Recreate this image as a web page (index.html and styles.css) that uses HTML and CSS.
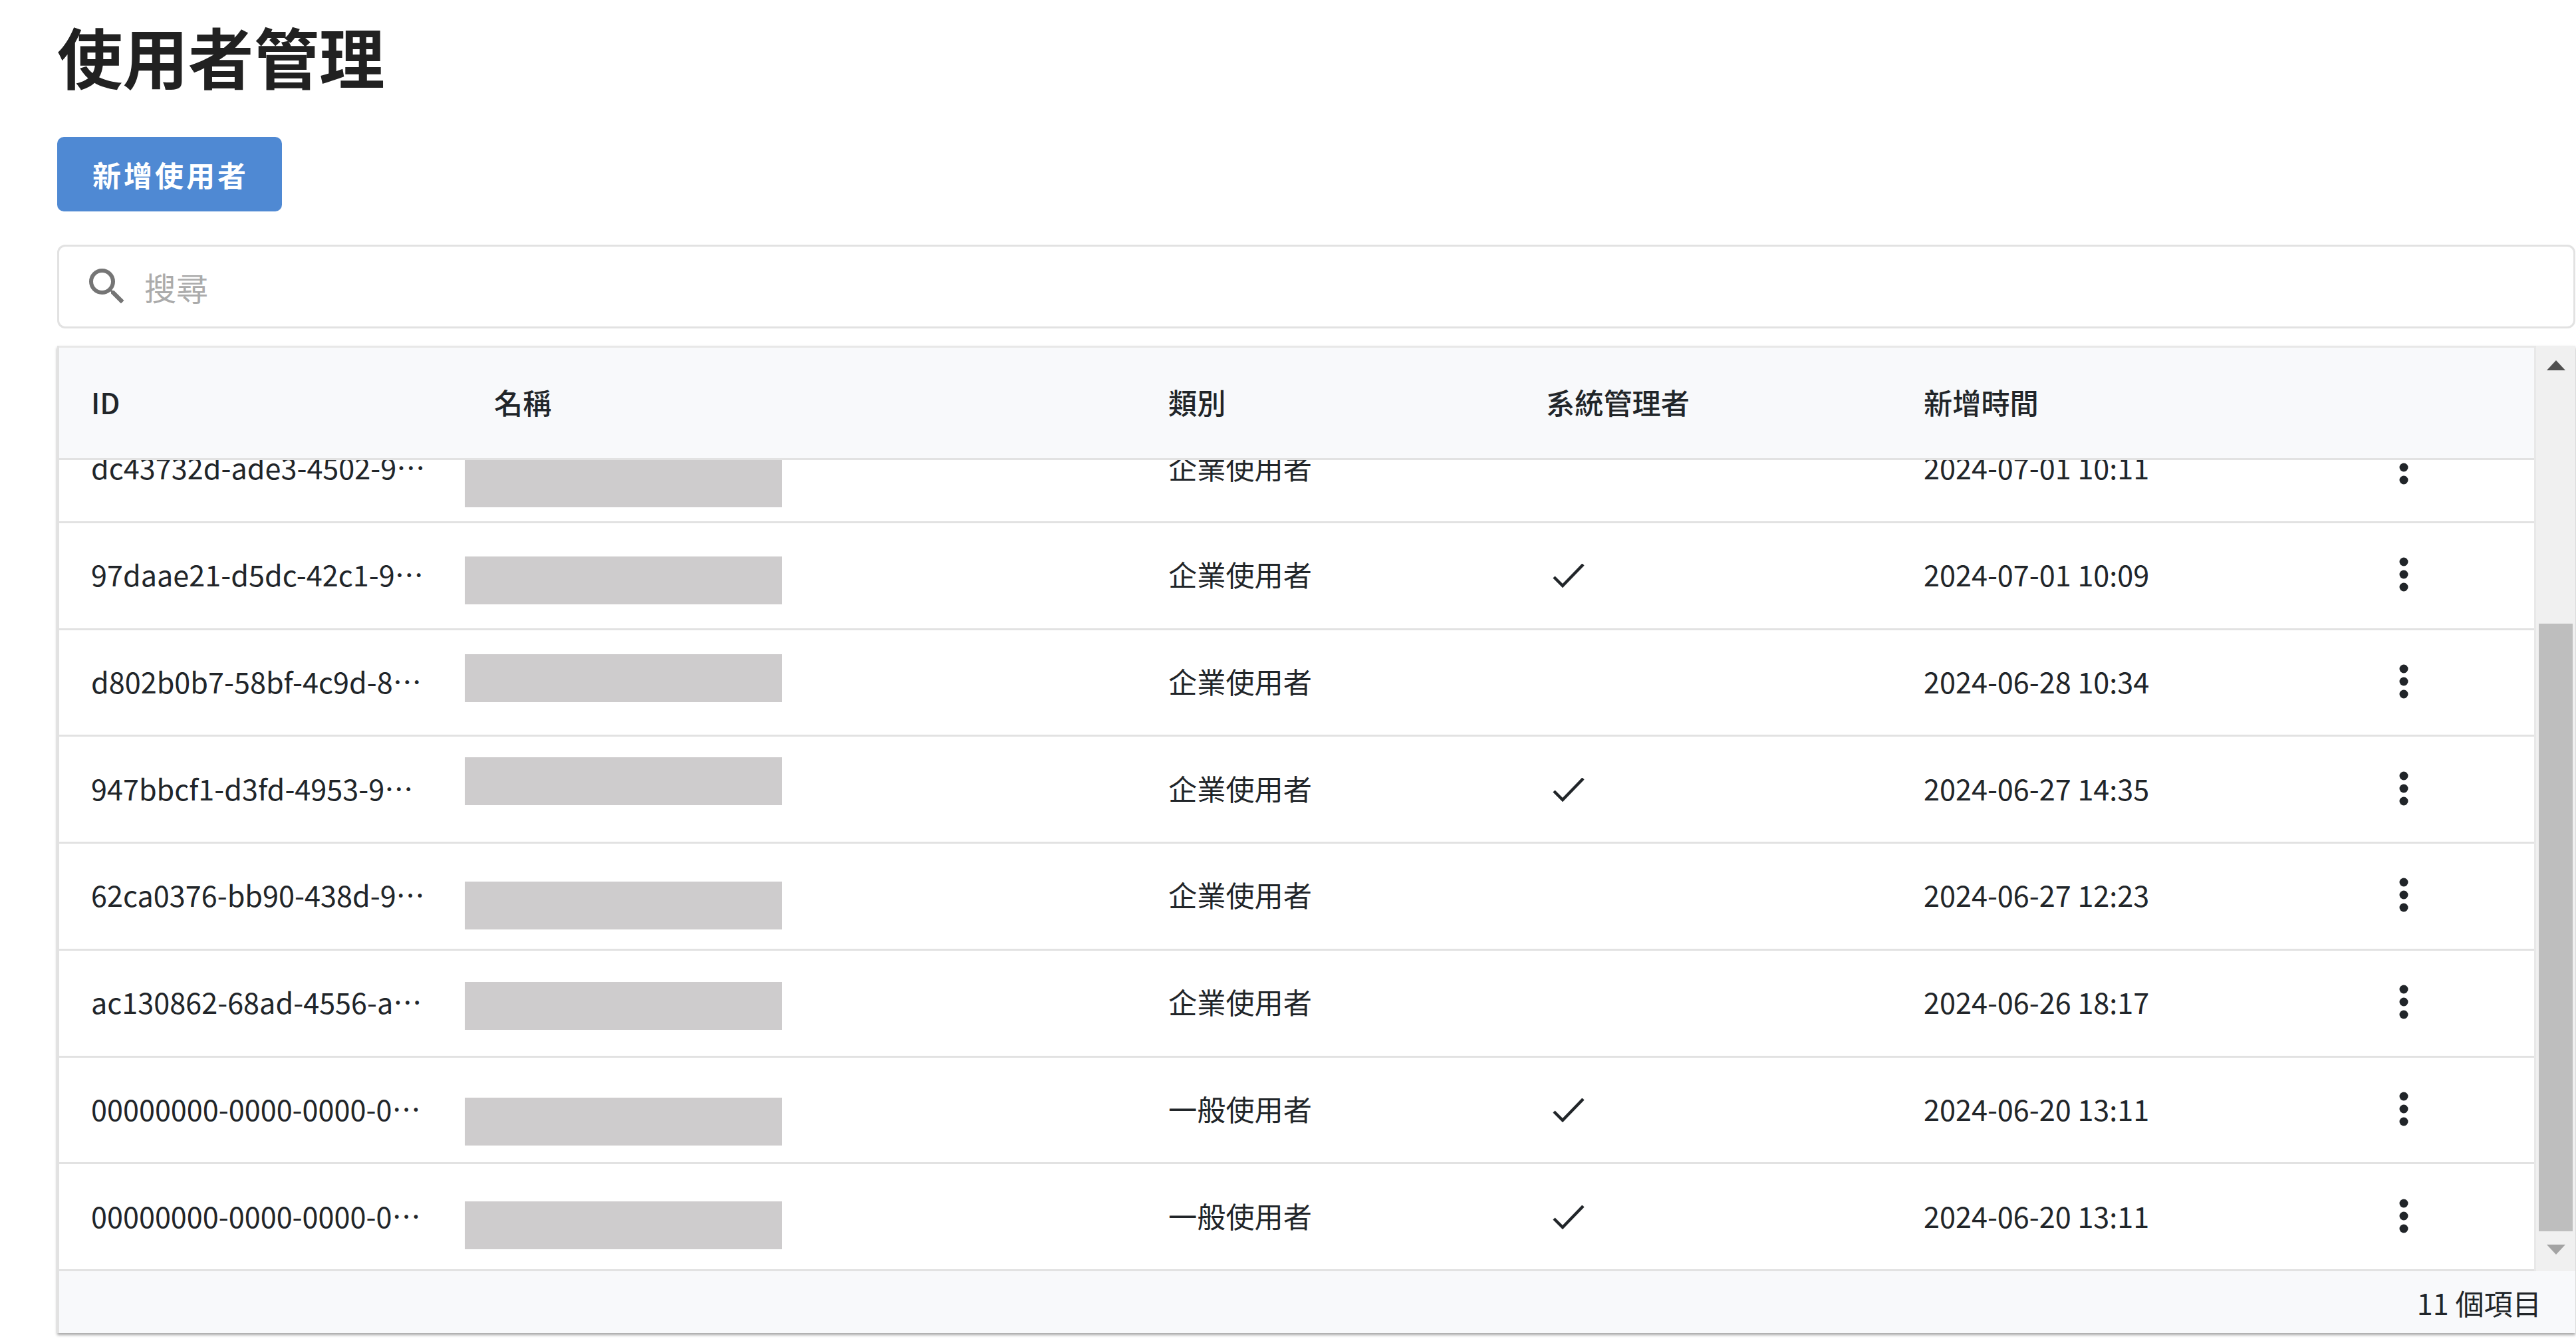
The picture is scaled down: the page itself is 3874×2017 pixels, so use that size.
FILE: index.html
```html
<!DOCTYPE html>
<html>
<head>
    <meta charset="UTF-8">
    <meta name="viewport" content="width=device-width, initial-scale=1.0">
    <title>使用者管理</title>
    <link rel="stylesheet" href="styles.css">
</head>
<body>
    <h1 class="page-title">使用者管理</h1>
    <button class="add-btn">新增使用者</button>

    <div class="search">
        <svg class="search-icon" viewBox="0 0 24 24"><path d="M15.5 14h-.79l-.28-.27A6.471 6.471 0 0 0 16 9.5 6.5 6.5 0 1 0 9.5 16c1.61 0 3.09-.59 4.23-1.57l.27.28v.79l5 4.99L20.49 19l-4.99-5zm-6 0C7.01 14 5 11.99 5 9.5S7.01 5 9.5 5 14 7.01 14 9.5 11.99 14 9.5 14z"/></svg>
        <input class="search-input" type="text" placeholder="搜尋">
    </div>

    <svg class="defs" width="0" height="0">
        <symbol id="more" viewBox="0 0 14 52"><circle cx="7" cy="7" r="6.5"/><circle cx="7" cy="26" r="6.5"/><circle cx="7" cy="45" r="6.5"/></symbol>
        <symbol id="check" viewBox="0 0 48 36"><path d="M2 20 L15 33 L46 1" fill="none" stroke="#212529" stroke-width="4.5"/></symbol>
    </svg>

    <div class="table">
        <div class="table-main">
            <div class="table-left">
                <div class="row head">
                    <div class="cell">ID</div>
                    <div class="cell">名稱</div>
                    <div class="cell">類別</div>
                    <div class="cell">系統管理者</div>
                    <div class="cell">新增時間</div>
                    <div class="cell"></div>
                </div>
                <div class="rows">
                    <div class="rows-inner">
                        <div class="row">
                            <div class="cell">dc43732d-ade3-4502-9<span class="ell">…</span></div>
                            <div class="cell"></div>
                            <div class="cell">企業使用者</div>
                            <div class="cell"></div>
                            <div class="cell">2024-07-01 10:11</div>
                            <div class="cell action"><svg class="more"><use href="#more"/></svg></div>
                            <div class="redact r1"></div>
                        </div>
                        <div class="row">
                            <div class="cell">97daae21-d5dc-42c1-9<span class="ell">…</span></div>
                            <div class="cell"></div>
                            <div class="cell">企業使用者</div>
                            <div class="cell"><svg class="check"><use href="#check"/></svg></div>
                            <div class="cell">2024-07-01 10:09</div>
                            <div class="cell action"><svg class="more"><use href="#more"/></svg></div>
                            <div class="redact r2"></div>
                        </div>
                        <div class="row">
                            <div class="cell">d802b0b7-58bf-4c9d-8<span class="ell">…</span></div>
                            <div class="cell"></div>
                            <div class="cell">企業使用者</div>
                            <div class="cell"></div>
                            <div class="cell">2024-06-28 10:34</div>
                            <div class="cell action"><svg class="more"><use href="#more"/></svg></div>
                            <div class="redact r3"></div>
                        </div>
                        <div class="row">
                            <div class="cell">947bbcf1-d3fd-4953-9<span class="ell">…</span></div>
                            <div class="cell"></div>
                            <div class="cell">企業使用者</div>
                            <div class="cell"><svg class="check"><use href="#check"/></svg></div>
                            <div class="cell">2024-06-27 14:35</div>
                            <div class="cell action"><svg class="more"><use href="#more"/></svg></div>
                            <div class="redact r4"></div>
                        </div>
                        <div class="row">
                            <div class="cell">62ca0376-bb90-438d-9<span class="ell">…</span></div>
                            <div class="cell"></div>
                            <div class="cell">企業使用者</div>
                            <div class="cell"></div>
                            <div class="cell">2024-06-27 12:23</div>
                            <div class="cell action"><svg class="more"><use href="#more"/></svg></div>
                            <div class="redact r5"></div>
                        </div>
                        <div class="row">
                            <div class="cell">ac130862-68ad-4556-a<span class="ell">…</span></div>
                            <div class="cell"></div>
                            <div class="cell">企業使用者</div>
                            <div class="cell"></div>
                            <div class="cell">2024-06-26 18:17</div>
                            <div class="cell action"><svg class="more"><use href="#more"/></svg></div>
                            <div class="redact r6"></div>
                        </div>
                        <div class="row">
                            <div class="cell">00000000-0000-0000-0<span class="ell">…</span></div>
                            <div class="cell"></div>
                            <div class="cell">一般使用者</div>
                            <div class="cell"><svg class="check"><use href="#check"/></svg></div>
                            <div class="cell">2024-06-20 13:11</div>
                            <div class="cell action"><svg class="more"><use href="#more"/></svg></div>
                            <div class="redact r7"></div>
                        </div>
                        <div class="row">
                            <div class="cell">00000000-0000-0000-0<span class="ell">…</span></div>
                            <div class="cell"></div>
                            <div class="cell">一般使用者</div>
                            <div class="cell"><svg class="check"><use href="#check"/></svg></div>
                            <div class="cell">2024-06-20 13:11</div>
                            <div class="cell action"><svg class="more"><use href="#more"/></svg></div>
                            <div class="redact r8"></div>
                        </div>
                    </div>
                </div>
            </div>
            <div class="scrollbar">
                <div class="arrow-up"></div>
                <div class="thumb"></div>
                <div class="arrow-down"></div>
            </div>
        </div>
        <div class="table-footer">11 個項目</div>
    </div>
</body>
</html>
```

FILE: styles.css
```css
* {
    box-sizing: border-box;
}

body {
    margin: 0;
    padding: 0 1px 0 86px;
    height: 100vh;
    overflow: hidden;
    background: #fff;
    color: #212529;
    font-family: "Noto Sans CJK TC", "Noto Sans", sans-serif;
    font-size: 43.2px;
}

.page-title {
    margin: 0;
    height: 206px;
    padding-top: 15px;
    font-size: 98.5px;
    line-height: 136px;
    font-weight: 700;
    color: #212121;
}

.add-btn {
    display: block;
    width: 338px;
    height: 112px;
    padding: 0;
    text-indent: 3px;
    background: #4f89d3;
    color: #fff;
    border: none;
    border-radius: 10px;
    font-family: inherit;
    font-size: 43px;
    font-weight: 700;
    letter-spacing: 4px;
}

.search {
    display: flex;
    align-items: center;
    height: 126px;
    margin-top: 50px;
    padding-left: 36px;
    border: 3px solid #e2e2e2;
    border-radius: 12px;
}

.search-icon {
    width: 72px;
    height: 72px;
    fill: #757575;
    flex: none;
}

.search-input {
    flex: 1;
    margin-left: 20px;
    border: none;
    outline: none;
    padding: 0;
    background: transparent;
    color: #212529;
    font-family: inherit;
    font-size: 48px;
    font-weight: 400;
}

.search-input::placeholder {
    color: #ababab;
}

.defs {
    position: absolute;
}

.table {
    margin-top: 26px;
    border-left: 3px solid #e2e2e2;
    box-shadow: 0 3px 4px rgba(0,0,0,0.35);
}

.table-main {
    display: flex;
    height: 1392px;
}

.table-left {
    flex: 1;
    min-width: 0;
    display: flex;
    flex-direction: column;
    border-right: 3px solid #e8e8e8;
}

.row {
    position: relative;
    display: grid;
    grid-template-columns: 604px 1014px 568px 568px 568px 1fr;
    align-items: center;
    height: 160.75px;
    padding-bottom: 5px;
    border-bottom: 3px solid #e2e2e2;
}

.row.head {
    flex: none;
    height: 172px;
    background: #f8f9fb;
    border-top: 3px solid #e8e8e8;
    font-weight: 500;
}

.cell {
    padding-left: 50px;
    white-space: nowrap;
}

.cell:first-child {
    padding-left: 48px;
}

.cell.action {
    padding-left: 8px;
    display: flex;
    justify-content: center;
}

.ell {
    display: inline-block;
}

.rows {
    flex: 1;
    overflow: hidden;
}

.rows-inner {
    margin-top: -66px;
}

.more {
    display: block;
    width: 14px;
    height: 52px;
    margin-top: 2px;
    fill: #212529;
}

.check {
    display: block;
    width: 48px;
    height: 36px;
    margin-top: 6px;
    margin-left: 10px;
}

/* blocks covering the names */
.redact {
    position: absolute;
    left: 610px;
    width: 477px;
    height: 72px;
    background: #cecccd;
}

.r1 { top: 65px; }
.r2 { top: 50px; }
.r3 { top: 36px; }
.r4 { top: 31px; }
.r5 { top: 57px; }
.r6 { top: 47px; }
.r7 { top: 60px; }
.r8 { top: 56px; }

.scrollbar {
    flex: none;
    width: 59px;
    background: #f0f0f0;
    padding: 22px 4px 0 4px;
}

.arrow-up {
    width: 28px;
    height: 0;
    margin: 0 auto 381px;
    border-left: 14px solid transparent;
    border-right: 14px solid transparent;
    border-bottom: 15px solid #505050;
}

.thumb {
    height: 914px;
    background: #bebebe;
}

.arrow-down {
    width: 28px;
    height: 0;
    margin: 20px auto 0;
    border-left: 14px solid transparent;
    border-right: 14px solid transparent;
    border-top: 15px solid #a3a3a3;
}

.table-footer {
    height: 93px;
    padding-right: 51px;
    display: flex;
    align-items: center;
    justify-content: flex-end;
    background: #f8f9fb;
}
```
